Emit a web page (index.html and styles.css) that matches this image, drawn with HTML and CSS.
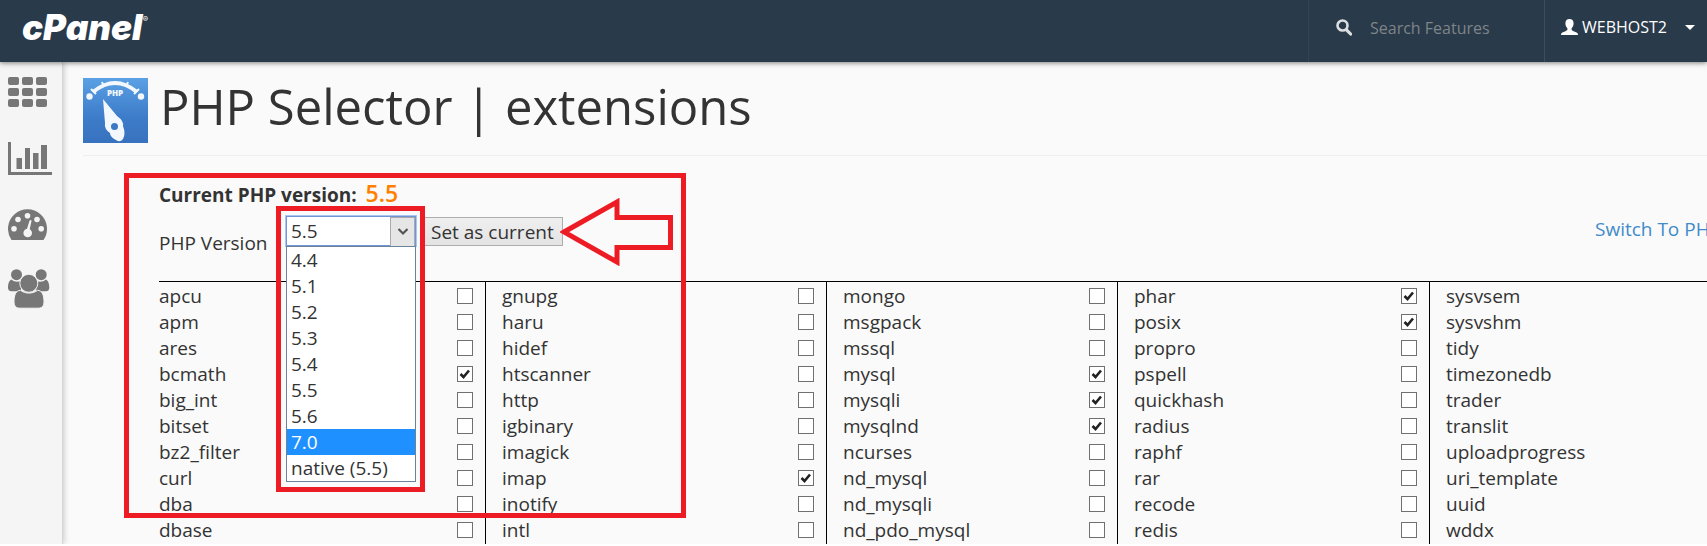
FILE: index.html
```html
<!DOCTYPE html>
<html lang="en">
<head>
    <meta charset="UTF-8">
    <meta name="viewport" content="width=device-width, initial-scale=1.0">
    <title>PHP Selector | extensions</title>
    <link rel="stylesheet" href="styles.css">
</head>
<body>
    <header class="topbar">
        <a class="logo" href="#">cPanel<sup>&reg;</sup></a>
        <div class="search">
            <svg width="16" height="17" viewBox="0 0 16 17" aria-hidden="true">
                <circle cx="6.5" cy="6.5" r="5" fill="none" stroke="#dcdfe2" stroke-width="2.6"/>
                <path d="M10.5 10.8L14.6 15" stroke="#dcdfe2" stroke-width="3.2" stroke-linecap="round"/>
            </svg>
            <input type="text" placeholder="Search Features" aria-label="Search Features">
        </div>
        <button class="user" type="button">
            <svg width="17" height="16" viewBox="0 0 17 16" aria-hidden="true">
                <path fill="#fff" d="M8.500 0C11 0 12.600 1.600 12.600 4.200C12.600 6.400 11.800 8.200 10.600 9.200V10.600C10.600 11.300 11.200 11.600 12 12L15.600 13.500C16.600 14 17 14.600 17 16H0C0 14.600.4 14 1.400 13.500L5 12C5.800 11.600 6.400 11.300 6.400 10.600V9.200C5.200 8.200 4.400 6.400 4.400 4.200C4.400 1.600 6 0 8.500 0Z"/>
            </svg>
            <span class="user-name">WEBHOST2</span>
            <span class="caret"></span>
        </button>
    </header>

    <div class="page">
        <nav class="sidebar">
            <a href="#" aria-label="Home">
                <svg width="48" height="48" viewBox="0 0 48 48">
                    <rect x="0" y="9" width="11" height="8" rx="2"/>
                    <rect x="14" y="9" width="11" height="8" rx="2"/>
                    <rect x="28" y="9" width="11" height="8" rx="2"/>
                    <rect x="0" y="20" width="11" height="8" rx="2"/>
                    <rect x="14" y="20" width="11" height="8" rx="2"/>
                    <rect x="28" y="20" width="11" height="8" rx="2"/>
                    <rect x="0" y="31" width="11" height="8" rx="2"/>
                    <rect x="14" y="31" width="11" height="8" rx="2"/>
                    <rect x="28" y="31" width="11" height="8" rx="2"/>
                </svg>
            </a>
            <a href="#" aria-label="Statistics">
                <svg width="48" height="48" viewBox="0 0 48 48">
                    <path d="M0 8H3V38H44V41H0Z"/>
                    <path d="M8.500 24H14V35H8.500ZM17 14H22V35H17ZM25 19H30.500V35H25ZM33 11H39V35H33Z"/>
                </svg>
            </a>
            <a href="#" aria-label="Dashboard">
                <svg width="48" height="48" viewBox="0 0 48 48">
                    <path d="M3.500 40A19.500 19.500 0 1 1 35.500 40Z"/>
                    <g class="hole">
                        <circle cx="6" cy="28.700" r="2.800"/>
                        <circle cx="10" cy="19.500" r="2.800"/>
                        <circle cx="19.500" cy="15.700" r="2.800"/>
                        <circle cx="29" cy="19.500" r="2.800"/>
                        <circle cx="33.200" cy="28.700" r="2.800"/>
                        <circle cx="19.700" cy="33" r="4.300"/>
                        <path d="M18.600 30L21.600 20.500Q22.600 19.500 23.600 20.800L21.400 30.500Z"/>
                    </g>
                </svg>
            </a>
            <a href="#" aria-label="User Manager">
                <svg width="48" height="48" viewBox="0 0 48 48">
                    <circle cx="8.500" cy="8.700" r="5.500"/>
                    <circle cx="33.200" cy="8.700" r="5.500"/>
                    <path d="M3.500 13.500C6 16 10 16.200 13 14.800V25.300H3.500C1 25.300 0 23.600 0 21.500C0 18 1 14.500 3.500 13.500Z"/>
                    <path d="M37.800 13.500C35.300 16 31.300 16.200 28.300 14.800V25.300H37.800C40.300 25.300 41.300 23.600 41.300 21.500C41.300 18 40.300 14.500 37.800 13.500Z"/>
                    <path class="front" d="M12.500 24.300C8 24.500 6 29 6 35.500C6 40 8 42.200 12 42.200H30C34 42.200 36 40 36 35.500C36 29 34 24.500 29.500 24.300C25 28 17 28 12.500 24.300Z"/>
                    <circle class="front" cx="20.800" cy="17.300" r="9"/>
                </svg>
            </a>
        </nav>

        <main class="content">
            <div class="page-title">
                <svg width="65" height="65" viewBox="0 0 65 65" aria-hidden="true">
                    <defs>
                        <linearGradient id="tile" x1="0" y1="0" x2="0" y2="1">
                            <stop offset="0" stop-color="#5ba0e4"/>
                            <stop offset="0.6" stop-color="#3d7cc9"/>
                            <stop offset="1" stop-color="#3872be"/>
                        </linearGradient>
                    </defs>
                    <rect width="65" height="65" fill="url(#tile)"/>
                    <path d="M10 14Q32 -4 54 14" fill="none" stroke="#f3f8fd" stroke-width="4"/>
                    <path d="M8 11L13 16M19 4L21 9M45 4L43 9M56 11L51 16M32 3V7" stroke="#f3f8fd" stroke-width="2"/>
                    <circle cx="6.500" cy="18.500" r="3.200" fill="#f3f8fd"/>
                    <circle cx="58" cy="18.500" r="3.200" fill="#f3f8fd"/>
                    <text class="tile-text" x="32" y="18" text-anchor="middle">PHP</text>
                    <path fill="#f3f8fd" fill-rule="evenodd" d="M20 21L34 38Q41 43 40 48Q43 56 40 61Q37 65 33 62Q27 59 27 55Q21 51 22 45ZM31.500 45A3.500 3.500 0 1 0 31.500 52A3.500 3.500 0 1 0 31.500 45Z"/>
                </svg>
                <h1>PHP Selector | extensions</h1>
            </div>

            <section class="selector">
                <p class="current">Current PHP version: <span class="current-value">5.5</span></p>

                <form class="version-form">
                    <label for="version">PHP Version</label>
                    <div class="version-picker">
                        <select id="version">
                            <option>5.5</option>
                        </select>
                        <ul class="version-list" role="listbox" aria-label="PHP Version">
                            <li role="option">4.4</li>
                            <li role="option">5.1</li>
                            <li role="option">5.2</li>
                            <li role="option">5.3</li>
                            <li role="option">5.4</li>
                            <li role="option">5.5</li>
                            <li role="option">5.6</li>
                            <li role="option" class="active" aria-selected="true">7.0</li>
                            <li role="option">native (5.5)</li>
                        </ul>
                        <div class="mark mark-list"></div>
                    </div>
                    <button class="set-current" type="button">Set as current</button>
                    <svg class="arrow" width="114" height="68" viewBox="0 0 114 68" aria-hidden="true">
                        <path d="M4 34L57 4V19.500H110.500V49.500H57V64Z"/>
                    </svg>
                    <a class="switch" href="#">Switch To PH</a>
                </form>

                <table class="extensions">
                    <colgroup>
                        <col class="col-1">
                        <col class="col-2">
                        <col class="col-3">
                        <col class="col-4">
                        <col class="col-5">
                    </colgroup>
                    <tbody id="extensionRows"></tbody>
                </table>

                <div class="mark mark-panel"></div>
            </section>
        </main>
    </div>

    <script>
        const extensions = [
            ["apcu", "gnupg", "mongo", "phar", "sysvsem"],
            ["apm", "haru", "msgpack", "posix", "sysvshm"],
            ["ares", "hidef", "mssql", "propro", "tidy"],
            ["bcmath", "htscanner", "mysql", "pspell", "timezonedb"],
            ["big_int", "http", "mysqli", "quickhash", "trader"],
            ["bitset", "igbinary", "mysqlnd", "radius", "translit"],
            ["bz2_filter", "imagick", "ncurses", "raphf", "uploadprogress"],
            ["curl", "imap", "nd_mysql", "rar", "uri_template"],
            ["dba", "inotify", "nd_mysqli", "recode", "uuid"],
            ["dbase", "intl", "nd_pdo_mysql", "redis", "wddx"]
        ];
        const enabled = ["bcmath", "imap", "mysql", "mysqli", "mysqlnd", "phar", "posix"];

        document.getElementById("extensionRows").innerHTML = extensions.map((row) => {
            const cells = row.map((name) => `
                <td><div class="extension">
                    <label for="ext-${name}">${name}</label>
                    <input type="checkbox" id="ext-${name}" ${enabled.includes(name) ? "checked" : ""}>
                </div></td>`);
            return `<tr>${cells.join("")}</tr>`;
        }).join("");
    </script>
</body>
</html>
```
FILE: styles.css
```css
* {
    box-sizing: border-box;
}
body {
    margin: 0;
    background: #fff;
    color: #333;
    font-family: "Open Sans", sans-serif;
    font-size: 19px;
    line-height: 26px;
    overflow: hidden;
}

/* Top bar */
.topbar {
    position: relative;
    z-index: 2;
    display: flex;
    height: 62px;
    background: #293a4a;
    box-shadow: 0 1px 5px rgba(0, 0, 0, 0.5);
}
.logo {
    margin-right: auto;
    padding: 8px 0 0 22px;
    color: #fff;
    font-family: Inter, sans-serif;
    font-size: 35px;
    font-style: italic;
    font-weight: 900;
    line-height: 38px;
    text-decoration: none;
}
.logo sup {
    font-size: 8px;
    font-weight: 400;
    line-height: 8px;
    vertical-align: 18px;
}
.search {
    display: flex;
    align-items: center;
    gap: 18px;
    width: 237px;
    padding: 0 20px 7px 27px;
    border-left: 1px solid #334454;
    border-right: 1px solid #3d4d5c;
}
.search input {
    flex: 1;
    min-width: 0;
    padding: 0;
    border: none;
    background: none;
    color: #fff;
    font-family: inherit;
    font-size: 16px;
}
.search input::placeholder {
    color: #7f8488;
}
.user {
    display: flex;
    align-items: center;
    gap: 4px;
    padding: 0 12px 8px 16px;
    border: none;
    background: none;
    color: #fff;
    font-family: inherit;
    font-size: 16px;
    cursor: pointer;
}
.caret {
    margin-left: 14px;
    border: 5px solid transparent;
    border-top-color: #fff;
    border-bottom: none;
}

/* Page frame */
.page {
    display: flex;
    background: #fafafa;
}
.sidebar {
    display: flex;
    flex-direction: column;
    flex: none;
    gap: 6px;
    width: 63px;
    background: #f5f5f5;
    border-right: 1px solid #d5d5d5;
    box-shadow: 1px 0 6px rgba(0, 0, 0, 0.2);
}
.sidebar a {
    display: flex;
    align-items: center;
    height: 60px;
    padding-left: 8px;
    fill: #777;
}
.hole {
    fill: #f5f5f5;
}
.front {
    stroke: #f5f5f5;
    stroke-width: 1;
}
.content {
    flex: 1;
    min-width: 0;
    padding: 16px 0 0 20px;
}
.page-title {
    display: flex;
    gap: 12px;
    padding-bottom: 12px;
    border-bottom: 1px solid #eee;
}
h1 {
    margin: 0;
    font-size: 49px;
    font-weight: 400;
    line-height: 56px;
    white-space: nowrap;
}
.tile-text {
    fill: #f3f8fd;
    font-size: 8px;
    font-weight: 800;
}

/* Version form */
.selector {
    position: relative;
    margin-left: 76px;
    padding-top: 26px;
}
.current {
    margin: 0 0 8px;
    font-size: 19px;
    font-weight: 700;
    line-height: 26px;
}
.current-value {
    margin-left: 4px;
    color: #ff8000;
    font-size: 23px;
    font-weight: 600;
    line-height: 20px;
}
.version-form {
    position: relative;
    display: flex;
    align-items: flex-start;
    height: 65px;
    white-space: nowrap;
}
.version-form label {
    width: 127px;
    padding-top: 14px;
}
.version-picker {
    position: relative;
    width: 130px;
    margin-right: 6px;
}
.version-picker select {
    display: block;
    width: 100%;
    height: 30px;
    padding: 0 4px;
    border: 1px solid #7295d8;
    outline: 1px solid #a9c6f5;
    border-radius: 0;
    appearance: none;
    background: #fff;
    color: #333;
    font-family: inherit;
    font-size: 19px;
}
.version-picker::after {
    content: "";
    position: absolute;
    top: 1px;
    right: 1px;
    width: 23px;
    height: 28px;
    border: 1px solid #aaa;
    background: url("data:image/svg+xml,%3Csvg xmlns='http://www.w3.org/2000/svg' width='12' height='10'%3E%3Cpath d='M1.500 2L6 6.500L10.500 2' fill='none' stroke='%23555' stroke-width='2.200'/%3E%3C/svg%3E") center no-repeat #e6e6e6;
    pointer-events: none;
}
.version-list {
    position: absolute;
    z-index: 1;
    top: 30px;
    left: 0;
    width: 100%;
    margin: 0;
    padding: 0;
    border: 1px solid #6a8399;
    background: #fff;
    list-style: none;
}
.version-list li {
    padding-left: 4px;
}
.version-list .active {
    background: #1e90ff;
    color: #fff;
}
.set-current {
    height: 29px;
    margin-top: 1px;
    padding: 0 8px;
    border: 1px solid #adadad;
    background: linear-gradient(#efefef, #e3e3e3);
    color: #333;
    font-family: inherit;
    font-size: 19px;
    line-height: 26px;
}
.switch {
    position: absolute;
    top: 0;
    left: calc(100% - 112px);
    color: #428bca;
    text-decoration: none;
}

/* Red annotations */
.mark {
    position: absolute;
    border: 5px solid #ed1c24;
    pointer-events: none;
}
.mark-list {
    top: -10px;
    left: -10px;
    width: 149px;
    height: 286px;
}
.mark-panel {
    top: 17px;
    left: -35px;
    width: 562px;
    height: 345px;
}
.arrow {
    position: absolute;
    top: -18px;
    left: 401px;
    fill: none;
    stroke: #ed1c24;
    stroke-width: 5;
}

/* Extensions */
.extensions {
    width: 100%;
    border-top: 1px solid #000;
    border-spacing: 0;
    table-layout: fixed;
}
.col-1 {
    width: 327px;
}
.col-2 {
    width: 341px;
}
.col-3 {
    width: 291px;
}
.col-4 {
    width: 312px;
}
.extensions td {
    padding: 0 12px 0 16px;
    border-right: 1px solid #000;
}
.extensions td:first-child {
    padding-left: 0;
}
.extensions td:last-child {
    border-right: none;
}
.extensions tr:last-child td {
    padding-bottom: 2px;
}
.extension {
    display: flex;
    align-items: center;
    justify-content: space-between;
    height: 26px;
    padding-top: 2px;
}
.extensions td:last-child input {
    display: none;
}
.extension input {
    width: 16px;
    height: 16px;
    margin: 0;
    border: 1px solid #707070;
    appearance: none;
    background: #fff;
}
.extension input:checked {
    background: url("data:image/svg+xml,%3Csvg xmlns='http://www.w3.org/2000/svg' width='14' height='14'%3E%3Cpath d='M2.500 7L5.500 10L11 3.500' fill='none' stroke='%23222' stroke-width='2.600'/%3E%3C/svg%3E") center no-repeat #fff;
}
```
